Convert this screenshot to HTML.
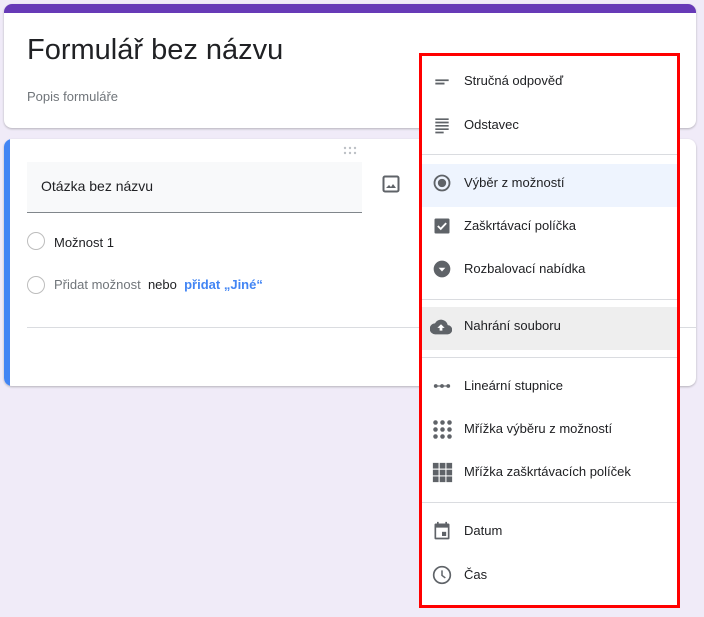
<!DOCTYPE html>
<html><head><meta charset="utf-8"><style>
*{margin:0;padding:0;box-sizing:border-box}
body{width:704px;height:617px;background:#f0ebf8;font-family:"Liberation Sans",Arial,sans-serif;position:relative;overflow:hidden;color:#202124}
.abs{position:absolute}
.card{position:absolute;background:#fff;border-radius:8px;box-shadow:0 1px 2px rgba(0,0,0,.25)}
.menu{position:absolute;left:419px;top:53px;width:261px;height:555px;border:3px solid #f00;background:#fff}
.it{position:absolute;left:0;width:255px;height:42px}
.it svg{position:absolute;left:10px;top:9px}
.it span{position:absolute;left:42px;top:11px;font-size:13px;color:#202124;white-space:nowrap}
.div{position:absolute;left:0;width:255px;height:1px;background:#dadce0}
</style></head><body>
<div class="card" style="left:4px;top:4px;width:692px;height:124px;overflow:hidden">
  <div class="abs" style="left:0;top:0;width:692px;height:9px;background:#673ab7"></div>
  <div class="abs" style="left:23px;top:30px;font-size:29px;color:#202124">Formulář bez názvu</div>
  <div class="abs" style="left:23px;top:85px;font-size:13px;color:#70757a">Popis formuláře</div>
</div>
<div class="card" style="left:4px;top:139px;width:692px;height:247px;overflow:hidden">
  <div class="abs" style="left:0;top:0;width:6px;height:247px;background:#4285f4"></div>
  <svg class="abs" style="left:339px;top:7px" width="14" height="9"><g fill="#bdc1c6"><circle cx="2" cy="2" r="1.2"/><circle cx="7" cy="2" r="1.2"/><circle cx="12" cy="2" r="1.2"/><circle cx="2" cy="7" r="1.2"/><circle cx="7" cy="7" r="1.2"/><circle cx="12" cy="7" r="1.2"/></g></svg>
  <div class="abs" style="left:23px;top:23px;width:335px;height:51px;background:#f8f9fa;border-bottom:1px solid #80868b"></div>
  <div class="abs" style="left:37px;top:39px;font-size:14px">Otázka bez názvu</div>
  <svg class="abs" style="left:378px;top:36px" width="18" height="18" viewBox="0 0 18 18"><rect x="1.5" y="1.5" width="15" height="15" rx="1.5" fill="none" stroke="#5f6368" stroke-width="2"/><path d="M4 13l3-3 2 2 2-3 3 4z" fill="#5f6368"/></svg>
  <div class="abs" style="left:23px;top:93px;width:18px;height:18px;border:1.5px solid #bdbdbd;border-radius:50%"></div>
  <div class="abs" style="left:50px;top:96px;font-size:13px">Možnost 1</div>
  <div class="abs" style="left:23px;top:137px;width:18px;height:18px;border:1.5px solid #bdbdbd;border-radius:50%"></div>
  <div class="abs" style="left:50px;top:138px;font-size:13px;color:#70757a">Přidat možnost <span style="color:#202124">&nbsp;nebo&nbsp;</span> <span style="color:#4285f4;font-weight:bold">přidat „Jiné“</span></div>
  <div class="abs" style="left:23px;top:188px;width:669px;height:1px;background:#dadce0"></div>
</div>
<div class="menu">
  <div class="it" style="top:6px"><svg width="20" height="20" viewBox="0 0 24 24"><path d="M4 10h16v2.2H4zM4 14h11v2.2H4z" fill="#5f6368"/></svg><span>Stručná odpověď</span></div>
  <div class="it" style="top:50px"><svg width="20" height="20" viewBox="0 0 24 24"><path d="M4 4h16v2H4zM4 8h16v2H4zM4 12h16v2H4zM4 16h16v2H4zM4 20h10v2H4z" fill="#5f6368"/></svg><span>Odstavec</span></div>
  <div class="div" style="top:98px"></div>
  <div class="it" style="top:108px;height:43px;background:#e8f0fe;opacity:.75"></div>
  <div class="it" style="top:108px"><svg width="20" height="20" viewBox="0 0 24 24"><circle cx="12" cy="12" r="9" fill="none" stroke="#5f6368" stroke-width="2.2"/><circle cx="12" cy="12" r="5" fill="#5f6368"/></svg><span>Výběr z možností</span></div>
  <div class="it" style="top:151px"><svg width="20" height="20" viewBox="0 0 24 24"><rect x="3" y="3" width="18" height="18" rx="1.5" fill="#5f6368"/><path d="M7 12l3.5 3.5 6.5-7" fill="none" stroke="#fff" stroke-width="2.2"/></svg><span>Zaškrtávací políčka</span></div>
  <div class="it" style="top:194px"><svg width="20" height="20" viewBox="0 0 24 24"><circle cx="12" cy="12" r="10" fill="#5f6368"/><path d="M8 10.5h8L12 15z" fill="#fff"/></svg><span>Rozbalovací nabídka</span></div>
  <div class="div" style="top:243px"></div>
  <div class="it" style="top:251px;height:43px;background:#eeeeee"></div>
  <div class="it" style="top:251px"><svg width="22" height="22" viewBox="0 0 24 24" style="left:8px;top:9px"><path d="M19.4 10A7.5 7.5 0 0 0 5.4 8 6 6 0 0 0 6 20h13a5 5 0 0 0 .4-10z" fill="#5f6368"/><path d="M12 9l-4 4h2.5v3h3v-3H16z" fill="#fff"/></svg><span>Nahrání souboru</span></div>
  <div class="div" style="top:301px"></div>
  <div class="it" style="top:311px"><svg width="20" height="20" viewBox="0 0 24 24"><path d="M3 11.3h18v1.4H3z" fill="#5f6368"/><circle cx="4.5" cy="12" r="2.3" fill="#5f6368"/><circle cx="12" cy="12" r="2.3" fill="#5f6368"/><circle cx="19.5" cy="12" r="2.3" fill="#5f6368"/></svg><span>Lineární stupnice</span></div>
  <div class="it" style="top:354px"><svg width="21" height="21" viewBox="0 0 24 24"><g fill="#5f6368"><circle cx="4" cy="4" r="2.6"/><circle cx="12" cy="4" r="2.6"/><circle cx="20" cy="4" r="2.6"/><circle cx="4" cy="12" r="2.6"/><circle cx="12" cy="12" r="2.6"/><circle cx="20" cy="12" r="2.6"/><circle cx="4" cy="20" r="2.6"/><circle cx="12" cy="20" r="2.6"/><circle cx="20" cy="20" r="2.6"/></g></svg><span>Mřížka výběru z možností</span></div>
  <div class="it" style="top:397px"><svg width="21" height="21" viewBox="0 0 24 24"><g fill="#5f6368"><rect x="1" y="1" width="6.5" height="6.5"/><rect x="8.8" y="1" width="6.5" height="6.5"/><rect x="16.5" y="1" width="6.5" height="6.5"/><rect x="1" y="8.8" width="6.5" height="6.5"/><rect x="8.8" y="8.8" width="6.5" height="6.5"/><rect x="16.5" y="8.8" width="6.5" height="6.5"/><rect x="1" y="16.5" width="6.5" height="6.5"/><rect x="8.8" y="16.5" width="6.5" height="6.5"/><rect x="16.5" y="16.5" width="6.5" height="6.5"/></g></svg><span>Mřížka zaškrtávacích políček</span></div>
  <div class="div" style="top:446px"></div>
  <div class="it" style="top:456px"><svg width="20" height="20" viewBox="0 0 24 24"><path d="M6 1h2v2h8V1h2v2h1.5A1.5 1.5 0 0 1 21 4.5v16a1.5 1.5 0 0 1-1.5 1.5h-15A1.5 1.5 0 0 1 3 20.5v-16A1.5 1.5 0 0 1 4.5 3H6zM5 8v12h14V8z" fill="#5f6368"/><rect x="12" y="13" width="5" height="5" fill="#5f6368"/></svg><span>Datum</span></div>
  <div class="it" style="top:500px"><svg width="20" height="20" viewBox="0 0 24 24"><circle cx="12" cy="12" r="10" fill="none" stroke="#5f6368" stroke-width="2"/><path d="M12 6.5v6l4 3" fill="none" stroke="#5f6368" stroke-width="1.8"/></svg><span>Čas</span></div>
</div>
</body></html>
